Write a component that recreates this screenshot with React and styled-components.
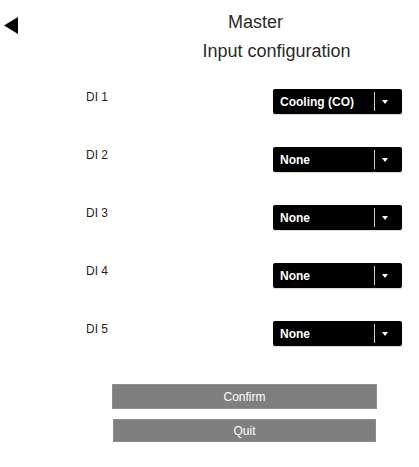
import React from 'react'
import styled, { createGlobalStyle } from 'styled-components'

const GlobalStyle = createGlobalStyle`
  body {
    margin: 0;
    background: #fff;
    font-family: 'Liberation Sans', Arial, sans-serif;
  }
`

const Page = styled.div`
  width: 419px;
  min-height: 467px;
  padding-top: 12px;
  box-sizing: border-box;
`

const Header = styled.header`
  display: grid;
  grid-template-columns: 14px 1fr;
  padding-left: 4px;
`

const BackButton = styled.button`
  margin-top: 5px;
  padding: 0;
  border: 0;
  background: none;
  width: 14px;
  height: 17px;
  cursor: pointer;
  align-self: start;
  svg {
    display: block;
  }
`

const Titles = styled.div`
  display: flex;
  flex-direction: column;
  gap: 8px;
`

const Title = styled.div`
  font-size: 18px;
  line-height: 21px;
  color: #2a2a2a;
  text-align: center;
  padding-left: ${props => props.shift}px;
`

const Rows = styled.div`
  display: flex;
  flex-direction: column;
  gap: 33px;
  margin-top: 27px;
  padding: 0 17px 0 86px;
`

const Row = styled.div`
  display: flex;
  justify-content: space-between;
  align-items: flex-start;
`

const Label = styled.span`
  font-size: 12px;
  line-height: 14px;
  padding-top: 1px;
  color: #1f1f1f;
`

const Select = styled.div`
  display: flex;
  align-items: stretch;
  width: 129px;
  height: 25px;
  background: #000;
  border-radius: 2px;
  box-shadow: 0 1px 1px rgba(0, 0, 0, 0.15);
  color: #fff;
  cursor: pointer;
`

const SelectValue = styled.span`
  flex: 1;
  display: flex;
  align-items: center;
  padding-left: 7px;
  font-size: 12px;
  font-weight: bold;
`

const Divider = styled.span`
  width: 1px;
  margin: 3px 0;
  background: #cfcfcf;
`

const ArrowBox = styled.span`
  width: 27px;
  display: flex;
  align-items: center;
  padding-left: 7px;
  box-sizing: border-box;
`

const Caret = styled.span`
  width: 0;
  height: 0;
  border-left: 3.5px solid transparent;
  border-right: 3.5px solid transparent;
  border-top: 4px solid #fff;
  margin-top: 1px;
`

const Actions = styled.div`
  display: flex;
  flex-direction: column;
  gap: 10px;
  margin-top: 38px;
  padding-left: 112px;
`

const ActionButton = styled.button`
  width: ${props => props.w}px;
  height: ${props => props.h}px;
  margin-left: ${props => props.offset || 0}px;
  border: 1px solid #8d8d8d;
  background: #7f7f7f;
  color: #fff;
  font-family: 'Liberation Sans', Arial, sans-serif;
  font-size: 12px;
  padding: 0;
  cursor: pointer;
`

const inputs = [
  { id: 'DI 1', value: 'Cooling (CO)' },
  { id: 'DI 2', value: 'None' },
  { id: 'DI 3', value: 'None' },
  { id: 'DI 4', value: 'None' },
  { id: 'DI 5', value: 'None' },
]

export default function App() {
  return (
    <Page>
      <GlobalStyle />
      <Header>
        <BackButton aria-label="Back">
          <svg width="14" height="17" viewBox="0 0 14 17">
            <polygon points="14,0 14,17 0,8.5" fill="#000" />
          </svg>
        </BackButton>
        <Titles>
          <Title shift={74}>Master</Title>
          <Title shift={116}>Input configuration</Title>
        </Titles>
      </Header>
      <Rows>
        {inputs.map(input => (
          <Row key={input.id}>
            <Label>{input.id}</Label>
            <Select>
              <SelectValue>{input.value}</SelectValue>
              <Divider />
              <ArrowBox>
                <Caret />
              </ArrowBox>
            </Select>
          </Row>
        ))}
      </Rows>
      <Actions>
        <ActionButton w={265} h={25}>Confirm</ActionButton>
        <ActionButton w={263} h={23} offset={1}>Quit</ActionButton>
      </Actions>
    </Page>
  )
}
